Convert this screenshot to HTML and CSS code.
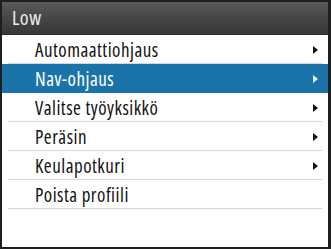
FILE: index.html
```html
<!DOCTYPE html>
<html>
<head>
<meta charset="utf-8">
<link rel="stylesheet" href="styles.css">
</head>
<body>
<div class="panel">
  <div class="header">Low</div>
  <ul class="menu">
    <li class="item"><span class="label">Automaattiohjaus</span><span class="arrow"></span></li>
    <li class="item selected"><span class="label">Nav-ohjaus</span><span class="arrow"></span></li>
    <li class="item"><span class="label">Valitse työyksikkö</span><span class="arrow"></span></li>
    <li class="item"><span class="label">Peräsin</span><span class="arrow"></span></li>
    <li class="item"><span class="label">Keulapotkuri</span><span class="arrow"></span></li>
    <li class="item"><span class="label">Poista profiili</span></li>
  </ul>
</div>
</body>
</html>
```
FILE: styles.css
```css
html, body {
  margin: 0;
  padding: 0;
  background: #1e1e1e;
}
.panel {
  width: 331px;
  height: 249px;
  box-sizing: border-box;
  border-style: solid;
  border-color: #1e1e1e;
  border-width: 2px 3px 2px 2px;
  background: #ffffff;
  font-family: "Open Sans", "Noto Sans", sans-serif;
  font-stretch: 80%;
  display: flex;
  flex-direction: column;
}
.header {
  height: 33px;
  box-sizing: border-box;
  background: linear-gradient(#5a5a5a, #484848 45%, #383838);
  border-bottom: 1px solid #2c2c2c;
  color: #ececec;
  font-size: 20px;
  letter-spacing: 0.5px;
  line-height: 31px;
  padding-left: 10px;
}
.menu {
  list-style: none;
  margin: 0;
  padding: 0;
}
.item {
  height: 29px;
  display: flex;
  align-items: center;
  justify-content: space-between;
  padding: 0 10px 0 33px;
  color: #141414;
  font-size: 19px;
  letter-spacing: 0.5px;
  background: linear-gradient(#ddd3d6, #ddd3d6) no-repeat center bottom / calc(100% - 12px) 1px;
}
.item.selected {
  background: #1b74a9;
  color: #ffffff;
}
.arrow {
  width: 0;
  height: 0;
  border-left: 5px solid #111;
  border-top: 4.5px solid transparent;
  border-bottom: 4.5px solid transparent;
}
.selected .arrow {
  border-left-color: #e8f2fa;
}
```
